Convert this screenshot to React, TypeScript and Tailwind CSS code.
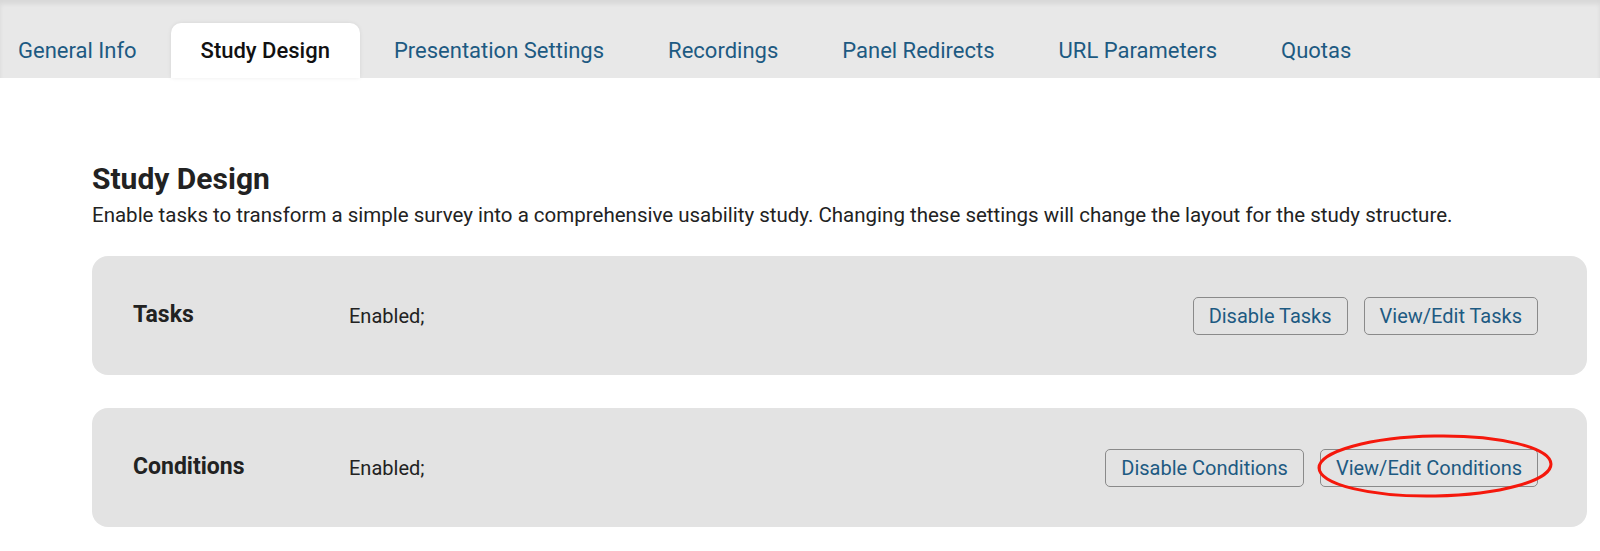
import React from "react";

const tabs = [
  "General Info",
  "Study Design",
  "Presentation Settings",
  "Recordings",
  "Panel Redirects",
  "URL Parameters",
  "Quotas",
];

function Card({
  label,
  buttons,
}: {
  label: string;
  buttons: string[];
}) {
  return (
    <div className="flex h-[119px] items-center rounded-[16px] bg-[#e3e3e3] pl-[41px] pr-[49px]">
      <div className="w-[216px] text-[23px] font-bold text-[#222]">{label}</div>
      <div className="flex-1 text-[20px] text-[#222]">Enabled;</div>
      <div className="flex gap-[16px]">
        {buttons.map((b) => (
          <button
            key={b}
            className="h-[38px] rounded-[5px] border border-[#8a8a8a] px-[15px] text-[20px] text-[#1d5a82]"
          >
            {b}
          </button>
        ))}
      </div>
    </div>
  );
}

export default function App() {
  return (
    <div
      className="relative h-[551px] w-[1600px] overflow-hidden bg-white"
      style={{ fontFamily: "Roboto, 'Noto Sans', sans-serif" }}
    >
      <div className="flex h-[78px] items-end gap-[4px] bg-[#e8e8e8] shadow-[inset_0_4px_4px_rgba(0,0,0,0.07)]">
        {tabs.map((t, i) => {
          const active = t === "Study Design";
          return (
            <div
              key={t}
              className={
                "flex h-[55px] items-center text-[22px] " +
                (i === 0 ? "pl-[18px] pr-[30px] " : "px-[30px] ") +
                (active
                  ? "rounded-t-[10px] bg-white font-medium text-[#111] shadow-[0_0_4px_rgba(0,0,0,0.08)]"
                  : "text-[#1d5a82]")
              }
            >
              {t}
            </div>
          );
        })}
      </div>

      <div className="pl-[92px] pr-[13px] pt-[83px]">
        <h1 className="text-[30px] font-bold leading-[36px] text-[#222]">Study Design</h1>
        <p className="mt-[5px] text-[20.5px] leading-[26px] text-[#222]">
          Enable tasks to transform a simple survey into a comprehensive usability study. Changing these settings will change the layout for the study structure.
        </p>
        <div className="mt-[28px] flex flex-col gap-[33px]">
          <Card label="Tasks" buttons={["Disable Tasks", "View/Edit Tasks"]} />
          <Card label="Conditions" buttons={["Disable Conditions", "View/Edit Conditions"]} />
        </div>
      </div>

      <svg
        className="pointer-events-none absolute left-0 top-0"
        width="1600"
        height="551"
      >
        <ellipse
          cx="1435"
          cy="466"
          rx="116"
          ry="30"
          fill="none"
          stroke="#f5180c"
          strokeWidth="3"
          transform="rotate(-1 1435 466)"
        />
      </svg>
    </div>
  );
}
